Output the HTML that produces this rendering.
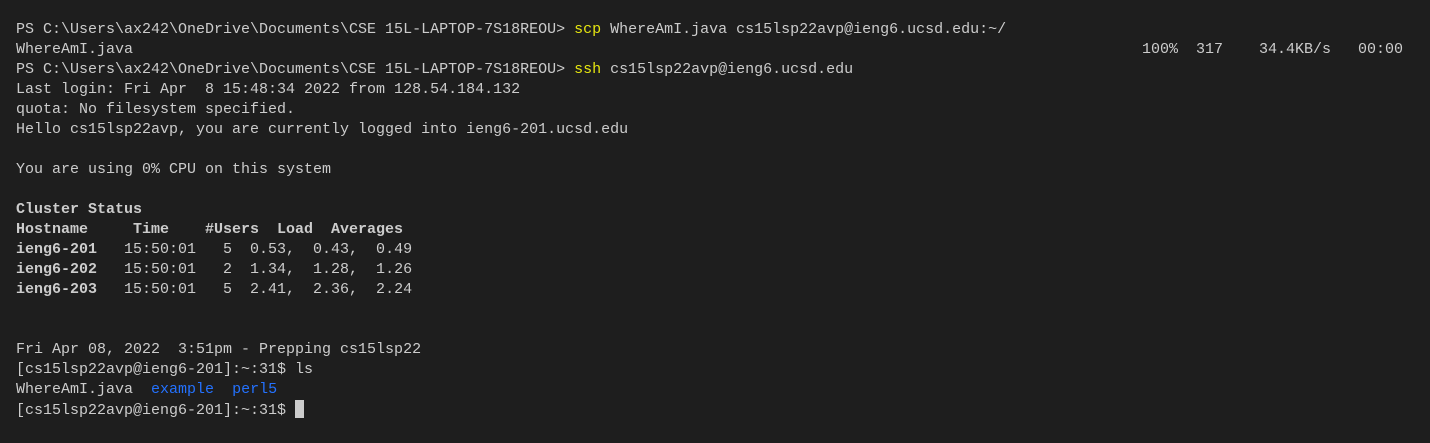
<!DOCTYPE html>
<html><head><style>
body{margin:0;background:#1e1e1e;width:1430px;height:443px;overflow:hidden}
pre{margin:0;position:absolute;left:16px;top:20px;font:15px/20px "Liberation Mono",monospace;color:#cccccc}
.y{color:#e5e510}.b{font-weight:bold}.bl{color:#2472ff}
.cur{display:inline-block;width:9px;height:18px;background:#cccccc;vertical-align:-4px}
.r{position:absolute;left:1142px;top:40px;font:15px/20px "Liberation Mono",monospace;color:#cccccc;white-space:pre}
</style></head><body>
<pre>PS C:\Users\ax242\OneDrive\Documents\CSE 15L-LAPTOP-7S18REOU&gt; <span class="y">scp</span> WhereAmI.java cs15lsp22avp@ieng6.ucsd.edu:~/
WhereAmI.java
PS C:\Users\ax242\OneDrive\Documents\CSE 15L-LAPTOP-7S18REOU&gt; <span class="y">ssh</span> cs15lsp22avp@ieng6.ucsd.edu
Last login: Fri Apr  8 15:48:34 2022 from 128.54.184.132
quota: No filesystem specified.
Hello cs15lsp22avp, you are currently logged into ieng6-201.ucsd.edu

You are using 0% CPU on this system

<span class="b">Cluster Status</span>
<span class="b">Hostname     Time    #Users  Load  Averages</span>
<span class="b">ieng6-201</span>   15:50:01   5  0.53,  0.43,  0.49
<span class="b">ieng6-202</span>   15:50:01   2  1.34,  1.28,  1.26
<span class="b">ieng6-203</span>   15:50:01   5  2.41,  2.36,  2.24


Fri Apr 08, 2022  3:51pm - Prepping cs15lsp22
[cs15lsp22avp@ieng6-201]:~:31$ ls
WhereAmI.java  <span class="bl">example</span>  <span class="bl">perl5</span>
[cs15lsp22avp@ieng6-201]:~:31$ <span class="cur"></span></pre>
<div class="r">100%  317    34.4KB/s   00:00</div>
</body></html>
